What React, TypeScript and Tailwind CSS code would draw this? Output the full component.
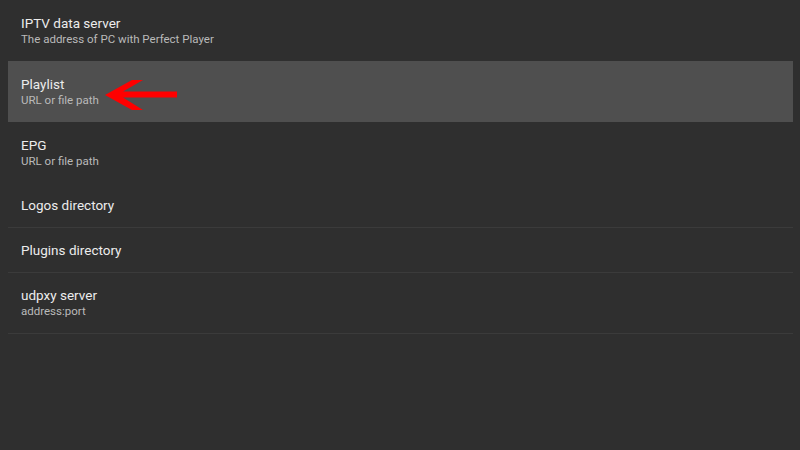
import React from 'react';

type Item = { title: string; subtitle?: string; selected?: boolean; divider?: boolean };

const items: Item[] = [
  { title: 'IPTV data server', subtitle: 'The address of PC with Perfect Player' },
  { title: 'Playlist', subtitle: 'URL or file path', selected: true },
  { title: 'EPG', subtitle: 'URL or file path' },
  { title: 'Logos directory', divider: true },
  { title: 'Plugins directory', divider: true },
  { title: 'udpxy server', subtitle: 'address:port', divider: true },
];

function RedArrow() {
  return (
    <svg width="74" height="32" viewBox="104 79 74 32" className="absolute left-[96px] top-[18px]">
      <polygon
        points="105,95 132,80 143,80 123,91.5 177,91.5 177,97.5 123,97.5 143,110 132,110"
        fill="#ff0000"
      />
    </svg>
  );
}

export default function App() {
  return (
    <div
      className="w-[800px] h-[450px] bg-[#2f2f2f] overflow-hidden"
      style={{ fontFamily: 'Roboto, "Noto Sans", sans-serif' }}
    >
      <div className="ml-2 mr-[7px] flex flex-col">
        {items.map((it) => (
          <div
            key={it.title}
            className={`relative flex flex-col justify-center pl-[13px] ${
              it.subtitle ? 'h-[61px]' : 'h-[45px]'
            } ${it.selected ? 'bg-[#4f4f4f]' : ''} ${
              it.divider ? 'border-b border-[#3b3b3b]' : ''
            }`}
          >
            <div className="text-[13.5px] leading-[17px] text-[#ececec]">{it.title}</div>
            {it.subtitle && (
              <div className="text-[11.5px] leading-[15px] text-[#bababa]">{it.subtitle}</div>
            )}
            {it.selected && <RedArrow />}
          </div>
        ))}
      </div>
    </div>
  );
}
